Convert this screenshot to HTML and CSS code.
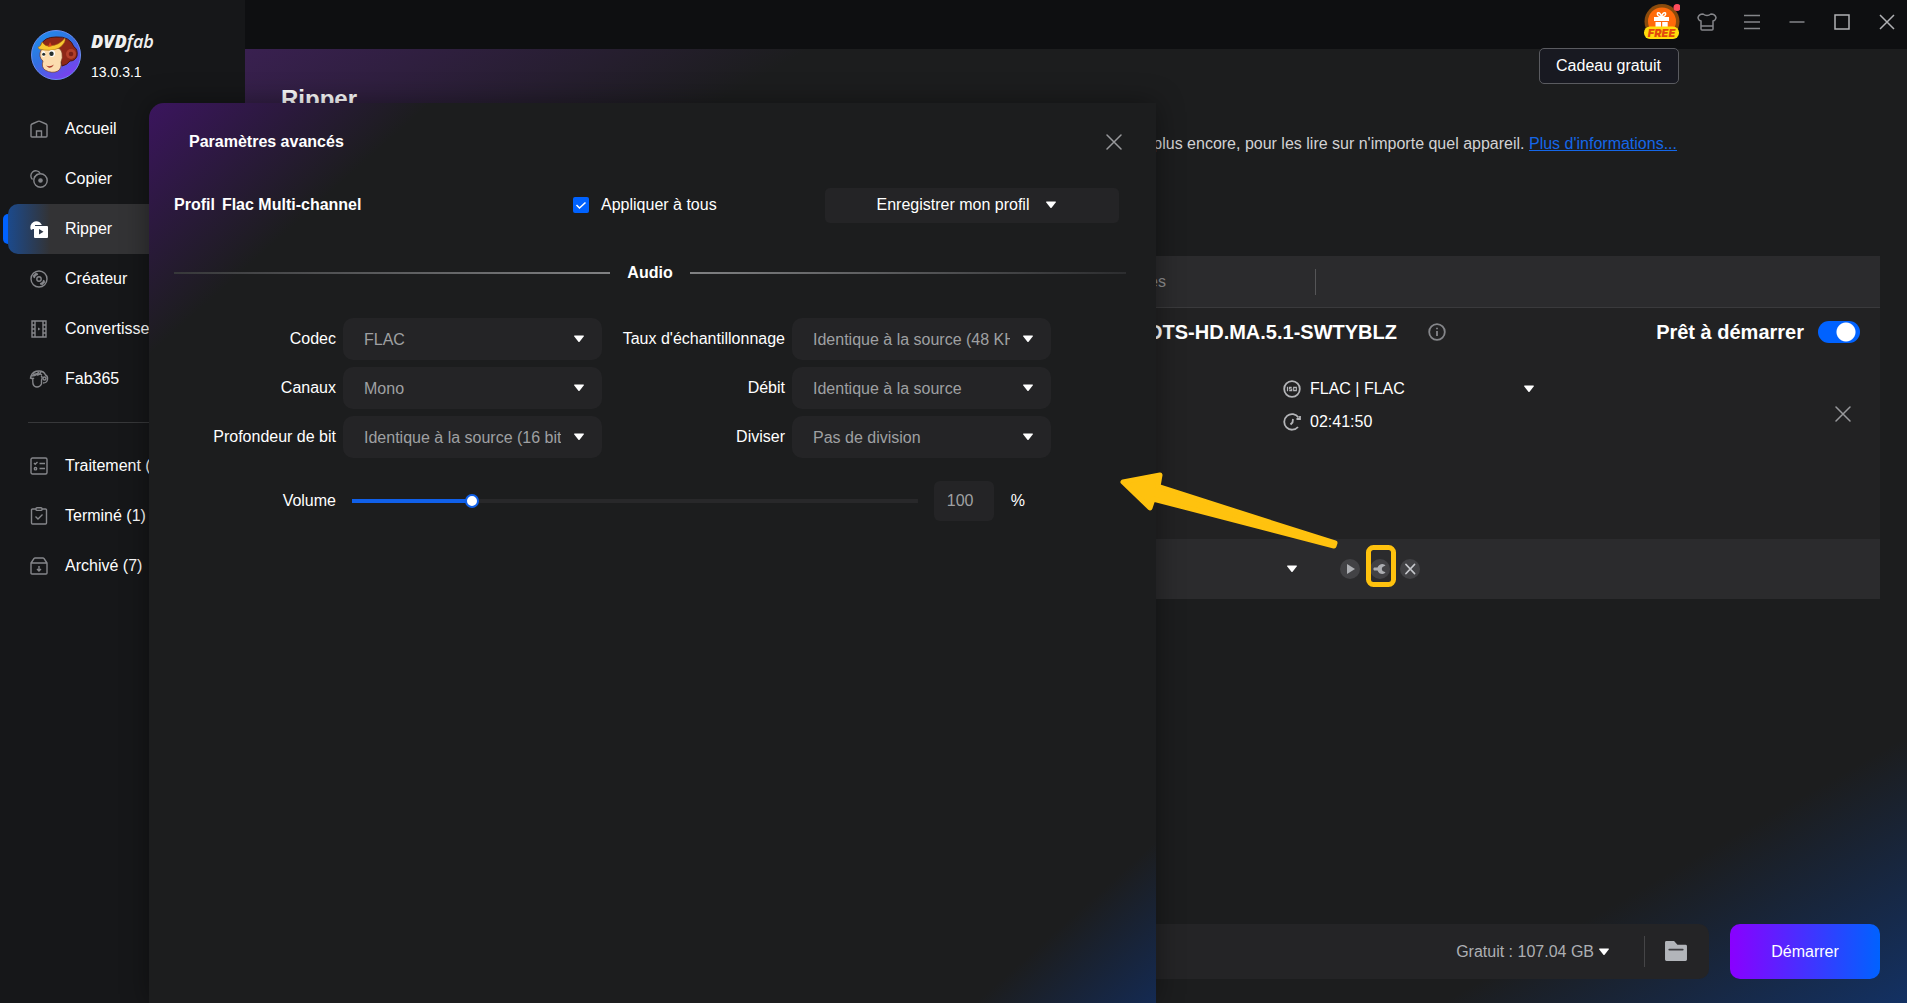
FILE: index.html
```html
<!DOCTYPE html>
<html lang="fr">
<head>
<meta charset="utf-8">
<meta name="viewport" content="width=device-width, initial-scale=1">
<title>DVDFab – Ripper</title>
<link rel="stylesheet" href="styles.css">
</head>
<body>
<svg class="sprite" aria-hidden="true">
  <symbol id="caret" viewBox="0 0 12 8"><path d="M1.500 .5h9q.6.3.2.9L6.600 6.800q-.6.5-1.200 0L1.300 1.400Q.9.800 1.500 .5z" fill="currentColor"/></symbol>
  <symbol id="cross" viewBox="0 0 16 16"><path d="M1 1l14 14M15 1L1 15" fill="none" stroke="currentColor" stroke-width="1.500" stroke-linecap="round"/></symbol>
</svg>
<div class="app">
  <aside class="sidebar">
    <div class="brand">
      <svg class="avatar" viewBox="0 0 50 50" aria-hidden="true">
        <defs><linearGradient id="disc" x1="0" y1="0" x2=".7" y2="1"><stop offset="0" stop-color="#1c93ee"/><stop offset=".5" stop-color="#3270e0"/><stop offset="1" stop-color="#7d3ff0"/></linearGradient></defs>
        <circle cx="25" cy="25" r="24.500" fill="url(#disc)" stroke="#6a8cf0" stroke-width="1"/>
        <path d="M10 15Q13 7 25 7Q39 6 43 17Q47 19 46 26Q44 31 39 31Q36 35 31 36L27 20L12 19Z" fill="#8e2717" stroke="#451512" stroke-width="1"/>
        <circle cx="40" cy="24" r="5" fill="#b3402a"/><circle cx="40" cy="24" r="2.300" fill="#7a1f16"/>
        <path d="M10 20Q15 17 22 18Q30 17 31 23Q32 28 30 32Q31 38 27 41Q21 44 14 40Q10 37 12 31Q7 27 10 20z" fill="#fbdcae" stroke="#7a3c22" stroke-width=".7"/>
        <path d="M7 17Q10 17 11 12Q14 17 19 16Q29 15 34 8Q35 13 28 18Q20 22 8 19Z" fill="#f8c832" stroke="#a86d12" stroke-width=".6"/>
        <path d="M19 12l2 4-4 1z" fill="#d8461e"/>
        <ellipse cx="12.500" cy="24" rx="1.700" ry="3" fill="#fff"/><ellipse cx="21" cy="23.500" rx="3" ry="3.400" fill="#fff"/>
        <circle cx="12.700" cy="24.300" r="1.500" fill="#25302e"/><circle cx="20.500" cy="23.800" r="2.200" fill="#25302e"/>
        <path d="M15 35.500Q19 37.500 23 34.500Q21 38.500 17.500 37.500z" fill="#a93a2a"/>
      </svg>
      <div class="brand-text">
        <span class="logo"><b>DVD</b>fab</span>
        <span class="version">13.0.3.1</span>
      </div>
    </div>
    <nav class="nav">
      <a href="#accueil"><svg class="ico" viewBox="0 0 18 18"><path d="M1 5.500Q1 4.500 2 4L8 1.300q1-.4 2 0L16 4q1 .5 1 1.500V16q0 1-1 1H2q-1 0-1-1zM6.500 17v-6h5v6"/></svg>Accueil</a>
      <a href="#copier"><svg class="ico" viewBox="0 0 18 18"><circle cx="10.500" cy="10.500" r="6.700"/><path d="M2.500 9.500A5 5 0 1 1 10 3M4 7.500L7.500 4"/><circle cx="10.500" cy="10.500" r="1.600" fill="currentColor"/></svg>Copier</a>
      <a href="#ripper" class="active" aria-current="page"><svg class="ico solid" viewBox="0 0 18 18"><path d="M1 10A5.500 5.500 0 1 1 11.500 4.500L12 5H5V9H3z"/><path fill-rule="evenodd" d="M4.500 6H17q1 0 1 1v10q0 1-1 1H5q-1 0-1-1V6.500zM9 9v5.500l4.500-2.700z"/></svg>Ripper</a>
      <a href="#createur"><svg class="ico" viewBox="0 0 18 18"><circle cx="9" cy="9" r="8"/><circle cx="9" cy="9" r="2.200"/><path d="M4 8a5 5 0 0 1 4-4M3 6.500L6.500 3M14 10a5 5 0 0 1-4 4M11.500 15l3.500-3.500"/></svg>Créateur</a>
      <a href="#convertisseur"><svg class="ico" viewBox="0 0 18 18"><path d="M2 1h14v16H2zM5 1v16M13 1v16M2 5h3M2 9h3M2 13h3M13 5h3M13 9h3M13 13h3"/><path d="M8 7.500v3L10.500 9z" fill="currentColor" stroke="none"/></svg>Convertisseur</a>
      <a href="#fab365"><svg class="ico" viewBox="0 0 18 18"><path d="M1 6Q3 1 9 1q5 0 6.500 4Q18 6 17.500 9.500T13 13M1 6l-.5 2Q3 9 4 8M3 8q-.5 3 0 6 1 3 4 3t4.500-3V10Q13 7 11 6M1 6Q5 6 7 4.500T12 5"/><circle cx="14.500" cy="8.500" r="1.500"/><path d="M3 4q4 1 6-2M7 5q3 0 4-3"/></svg>Fab365</a>
    </nav>
    <nav class="nav nav-queue">
      <a href="#traitement"><svg class="ico" viewBox="0 0 18 18"><rect x="1" y="1" width="16" height="16" rx="1.500"/><path d="M4 6l1.200 1.200L7.500 5M9.500 6.500H15M9.500 11.500H15"/><circle cx="5.500" cy="11.700" r="1.200"/></svg>Traitement (0)</a>
      <a href="#termine"><svg class="ico" viewBox="0 0 18 18"><path d="M6 2H2.500q-1 0-1 1v13q0 1 1 1h13q1 0 1-1V3q0-1-1-1H12"/><rect x="6" y=".8" width="6" height="2.600" rx="1"/><path d="M5.500 9.500L8 12l4.500-4.500"/></svg>Terminé (1)</a>
      <a href="#archive"><svg class="ico" viewBox="0 0 18 18"><path d="M1 6L4 1.500Q4.500 1 5 1h8q.5 0 1 .5L17 6v10q0 1-1 1H2q-1 0-1-1zM1 6h16M9 9v5M7 12l2 2 2-2"/></svg>Archivé (7)</a>
    </nav>
  </aside>

  <header class="topbar">
    <button type="button" aria-label="Cadeau gratuit">
      <svg class="gift" viewBox="0 0 36 36"><circle cx="18" cy="17.500" r="17.500" fill="#8a4b0c"/><circle cx="18" cy="17.500" r="14" fill="#ff6a0a"/><path d="M10 13h15v4H10zM11.500 18h5.500v6h-5.500zM18.200 18h5.500v6h-5.500z" fill="#fff"/><path d="M17.500 13q-5-1-4-4 3-1 4 4q1-5 4-4 1 3-4 4z" fill="none" stroke="#fff" stroke-width="1.500"/><rect x="0" y="22.500" width="35" height="12.500" rx="6" fill="#ffdc0c"/><text x="17.500" y="33" text-anchor="middle" class="free">FREE</text><circle cx="33" cy="3.500" r="3.500" fill="#ff4d5e"/></svg>
    </button>
    <button type="button" aria-label="Thèmes"><svg class="win" viewBox="0 0 20 18"><path d="M6 1Q10 4 14 1q4 0 5 3.500-.3 3-3 3.500v8q0 1-1 1H5q-1 0-1-1V8Q1.300 7.500 1 4.500 2 1 6 1zM4 13h12"/></svg></button>
    <button type="button" aria-label="Menu"><svg class="win" viewBox="0 0 20 18"><path d="M2 2.500h16M2 9h16M2 15.500h16"/></svg></button>
    <button type="button" aria-label="Réduire"><svg class="win" viewBox="0 0 20 18"><path d="M2.500 9h15"/></svg></button>
    <button type="button" aria-label="Agrandir"><svg class="win light" viewBox="0 0 20 18"><path d="M3 2h14v14H3z"/></svg></button>
    <button type="button" aria-label="Fermer"><svg class="win light" viewBox="0 0 20 18"><path d="M3 2l14 14M17 2L3 16"/></svg></button>
    <div class="tooltip" role="tooltip">Cadeau gratuit</div>
  </header>

  <main class="main">
    <h1>Ripper</h1>
    <p class="desc">Convertissez vos DVD, Blu-ray et plus encore, pour les lire sur n'importe quel appareil. <a href="#infos">Plus d'informations...</a></p>
    <section class="source">
      <div class="source-head"><span>Titres</span><i></i></div>
      <div class="source-title">
        <h2>DTS-HD.MA.5.1-SWTYBLZ<svg class="info" viewBox="0 0 18 18"><circle cx="9" cy="9" r="7.800"/><path d="M9 8v5M9 4.800v1.500"/></svg></h2>
        <label class="ready">Prêt à démarrer <input type="checkbox" class="toggle" checked></label>
      </div>
      <div class="source-body">
        <div class="facts">
          <button type="button" class="fact"><svg class="fico" viewBox="0 0 18 18"><circle cx="9" cy="9" r="7.800"/><path d="M4.500 6.800v4.400M8.700 7.400H6.500V9h2.200v1.700H6.200M10.700 7.400h2.600v3.300h-2.600z" stroke-width="1.200"/></svg>FLAC | FLAC<svg class="caret"><use href="#caret"/></svg></button>
          <div class="fact"><svg class="fico" viewBox="0 0 18 18"><path d="M15.500 4.500A7.800 7.800 0 1 0 15 14M13.500 6H17V3M10 6L9.500 9.500 7.500 11.500"/></svg>02:41:50</div>
        </div>
        <button type="button" class="remove" aria-label="Supprimer"><svg><use href="#cross"/></svg></button>
      </div>
      <div class="source-foot">
        <svg class="caret"><use href="#caret"/></svg>
        <div class="actions">
          <button type="button" aria-label="Lire"><svg viewBox="0 0 20 20"><path d="M7 5l8 5-8 5z" fill="#adafb3"/></svg></button>
          <div class="marked">
            <button type="button" aria-label="Paramètres avancés"><svg viewBox="0 0 20 20"><path d="M4 8.500h3.500Q9 5 12.500 5q2 0 3 1.500L12.500 8Q11 10 12.500 12l3 1.200Q14.500 15 12.500 15 9 15 7.500 11.500H4Q2.500 10 4 8.500z" fill="#adafb3"/></svg></button>
            <svg class="pointer" viewBox="0 0 285 124" aria-hidden="true"><path d="M8 14L45 7 43 18.500 220 75 219 78 38 31 35 40Z" fill="#ffc20e" stroke="#ffc20e" stroke-width="5" stroke-linejoin="round"/><rect x="253.500" y="79.500" width="25" height="37" rx="5" fill="none" stroke="#ffc20e" stroke-width="5"/></svg>
          </div>
          <button type="button" aria-label="Retirer"><svg viewBox="0 0 20 20"><path d="M6 5.500l8.500 9M14.500 5.500l-8.500 9" stroke="#c6c8cc" stroke-width="1.800" stroke-linecap="round"/></svg></button>
        </div>
      </div>
    </section>
    <footer class="output">
      <div class="output-bar">
        <button type="button" class="space">Gratuit : 107.04 GB <svg class="caret"><use href="#caret"/></svg></button>
        <button type="button" class="folder" aria-label="Ouvrir le dossier"><svg viewBox="0 0 24 22"><path d="M2 0h8l3.500 4H22q1.500 0 1.500 1.500v14Q23.500 21 22 21H2Q.5 21 .5 19.500V1.500Q.5 0 2 0z" fill="#b2b5ba"/><path d="M5 9h14" stroke="#3c3d40" stroke-width="2" stroke-linecap="round"/></svg></button>
      </div>
      <button type="button" class="start">Démarrer</button>
    </footer>
  </main>

  <section class="dialog" role="dialog" aria-labelledby="dialog-title">
    <div class="dialog-head">
      <h2 id="dialog-title">Paramètres avancés</h2>
      <button type="button" class="close" aria-label="Fermer"><svg><use href="#cross"/></svg></button>
    </div>
    <div class="profile">
      <p><span>Profil</span><span>Flac Multi-channel</span></p>
      <label class="apply"><span class="box"><input type="checkbox" checked><svg viewBox="0 0 16 16"><path d="M3.500 8l3 3L12.500 5.500" fill="none" stroke="#fff" stroke-width="1.500"/></svg></span>Appliquer à tous</label>
      <button type="button" class="save">Enregistrer mon profil<svg class="caret"><use href="#caret"/></svg></button>
    </div>
    <h3 class="rule">Audio</h3>
    <form class="fields">
      <label for="codec">Codec</label>
      <span class="pick"><select id="codec"><option>FLAC</option></select><svg class="caret"><use href="#caret"/></svg></span>
      <label for="taux">Taux d'échantillonnage</label>
      <span class="pick"><select id="taux"><option>Identique à la source (48 KHz)</option></select><svg class="caret"><use href="#caret"/></svg></span>
      <label for="canaux">Canaux</label>
      <span class="pick"><select id="canaux"><option>Mono</option></select><svg class="caret"><use href="#caret"/></svg></span>
      <label for="debit">Débit</label>
      <span class="pick"><select id="debit"><option>Identique à la source</option></select><svg class="caret"><use href="#caret"/></svg></span>
      <label for="bits">Profondeur de bit</label>
      <span class="pick"><select id="bits"><option>Identique à la source (16 bits)</option></select><svg class="caret"><use href="#caret"/></svg></span>
      <label for="diviser">Diviser</label>
      <span class="pick"><select id="diviser"><option>Pas de division</option></select><svg class="caret"><use href="#caret"/></svg></span>
      <label for="volume" class="volume-label">Volume</label>
      <div class="volume">
        <input type="range" id="volume" min="0" max="490" value="100">
        <input type="text" class="percent" value="100" aria-label="Volume en pourcentage"><span>%</span>
      </div>
    </form>
  </section>
</div>
</body>
</html>
```
FILE: styles.css
```css
* { box-sizing: border-box; }

body {
  margin: 0;
  background: #1c1d1e;
  color: #fff;
  font: 16px/20px "Liberation Sans", Arial, sans-serif;
}

h1, h2, h3, p { margin: 0; }

button, input, select { font: inherit; color: inherit; }

button {
  padding: 0;
  border: 0;
  background: none;
  cursor: pointer;
}

svg { display: block; }

.sprite { position: absolute; width: 0; height: 0; }

.caret { width: 12px; height: 8px; flex: none; color: #fff; }

.app {
  position: relative;
  display: grid;
  grid-template: 49px 1fr / 245px minmax(0, 1fr);
  min-height: 100vh;
  overflow: hidden;
}

/* Sidebar */
.sidebar {
  position: relative;
  z-index: 0;
  grid-row: 1 / 3;
  padding-top: 30px;
  background: #161719;
}

.brand {
  display: flex;
  gap: 10px;
  height: 74px;
  padding-left: 31px;
}

.avatar { width: 50px; height: 50px; }

.brand-text { display: flex; flex-direction: column; gap: 10px; }

.logo {
  font: italic 600 18px/22px "Open Sans", sans-serif;
  color: #f0f0f0;
}

.logo b { font-weight: 800; }

.version { font-size: 14px; }

.nav a {
  position: relative;
  display: flex;
  align-items: center;
  gap: 17px;
  height: 50px;
  margin-left: 8px;
  padding-left: 22px;
  border-radius: 10px 0 0 10px;
  color: #fff;
  text-decoration: none;
}

.nav .active { background: linear-gradient(90deg, #1c4a8c, #333335 42px); }

.nav .active::before {
  content: "";
  position: absolute;
  z-index: -1;
  left: -5px;
  top: 10px;
  width: 10px;
  height: 30px;
  border-radius: 5px 0 0 5px;
  background: #0062ff;
}

.nav-queue {
  margin-top: 18px;
  margin-left: 28px;
  padding-top: 18px;
  border-top: 1px solid #37383a;
}

.nav-queue a { margin-left: -20px; }

.ico {
  width: 18px;
  height: 18px;
  overflow: visible;
  fill: none;
  stroke: #85868a;
  stroke-width: 1.4px;
  color: #85868a;
}

.ico.solid { fill: #fff; stroke: none; }

/* Title bar */
.topbar {
  position: relative;
  display: flex;
  justify-content: flex-end;
  gap: 5px;
  height: 49px;
  padding-top: 4px;
  background: #0e0f11;
}

.topbar button {
  display: grid;
  place-items: center;
  width: 40px;
  height: 36px;
}

.gift { width: 36px; height: 36px; }

.free { font: italic 900 11px "Inter", sans-serif; fill: #e2480c; }

.win {
  width: 20px;
  height: 18px;
  fill: none;
  stroke: #85868a;
  stroke-width: 1.5px;
}

.win.light { stroke: #b0b1b4; }

.tooltip {
  position: absolute;
  top: 48px;
  right: 228px;
  padding: 7px 17px 7px 16px;
  border: 1px solid #5a5b60;
  border-radius: 5px;
  background: #181921;
}

/* Main panel */
.main {
  display: flex;
  flex-direction: column;
  padding: 36px 27px 24px 36px;
  background: linear-gradient(to bottom right, #392050, #1c1d1e 17%, #1c1d1e 86%, #133163);
}

h1 { font-size: 24px; line-height: 28px; }

.desc {
  margin: 21px 203px 0 0;
  color: #d2d2d4;
  text-align: right;
  white-space: nowrap;
}

.desc a { color: #1567e8; }

.source { margin-top: 102px; background: #222223; }

.source-head {
  display: grid;
  grid-template-columns: minmax(0, 1fr) 150px 564px;
  align-items: center;
  height: 52px;
  border-bottom: 1px solid #3a3a3c;
  background: #2b2b2d;
  color: #8e8e90;
  text-align: right;
}

.source-head i { height: 26px; border-right: 1px solid #555557; }

.source-title {
  display: grid;
  grid-template-columns: minmax(0, 1fr) 434px;
  align-items: center;
  height: 48px;
}

.source-title h2 {
  display: flex;
  align-items: center;
  justify-content: flex-end;
  gap: 31px;
  font-size: 20px;
}

.info { width: 18px; height: 18px; fill: none; stroke: #85868a; stroke-width: 1.8px; }

.ready {
  display: flex;
  align-items: center;
  justify-content: flex-end;
  gap: 14px;
  padding-right: 20px;
  font-size: 20px;
  font-weight: bold;
}

.toggle {
  appearance: none;
  width: 42px;
  height: 22px;
  margin: 0;
  border-radius: 11px;
  background: radial-gradient(circle at 28px 11px, #fff 9px, #0062ff 10px);
}

.source-body {
  display: flex;
  justify-content: flex-end;
  gap: 300px;
  height: 183px;
  padding-right: 29px;
}

.facts { width: 252px; padding-top: 16px; }

.fact {
  display: flex;
  align-items: center;
  gap: 9px;
  width: 100%;
  height: 33px;
  text-align: left;
}

.fact .caret { margin-left: auto; }

.fico { width: 18px; height: 18px; fill: none; stroke: #b4b5b8; stroke-width: 1.8px; }

.remove { height: 16px; margin-top: 50px; color: #98999c; }

.remove svg, .close svg { width: 16px; height: 16px; }

.source-foot {
  display: flex;
  align-items: center;
  justify-content: flex-end;
  gap: 42px;
  height: 60px;
  padding-right: 460px;
  background: #2b2b2d;
}

.actions { display: flex; gap: 10px; }

.actions button {
  display: block;
  width: 20px;
  height: 20px;
  border-radius: 50%;
  background: #424245;
}

.marked { position: relative; }

.pointer {
  position: absolute;
  z-index: 2;
  left: -255px;
  top: -91px;
  width: 285px;
  height: 124px;
  pointer-events: none;
}

.output {
  display: flex;
  gap: 21px;
  height: 55px;
  margin-top: auto;
}

.output-bar {
  flex: 1;
  display: flex;
  align-items: center;
  justify-content: flex-end;
  padding-right: 21px;
  border-radius: 10px;
  background: #242426;
}

.space {
  display: flex;
  align-items: center;
  gap: 4px;
  padding-right: 34px;
  color: #adafb3;
}

.folder { padding: 5px 0 5px 19px; border-left: 1px solid #454547; }

.folder svg { width: 24px; height: 21px; }

.start {
  width: 150px;
  border-radius: 10px;
  background: linear-gradient(90deg, #8a00ff, #0062ff);
}

/* Advanced settings dialog */
.dialog {
  position: absolute;
  z-index: 1;
  inset: 103px 751px 0 149px;
  min-width: 900px;
  border-radius: 15px 0 0 0;
  background: linear-gradient(to bottom right, #3b155e, #1c1d1e 14%, #1c1d1e 91%, #142a52);
  box-shadow: 0 0 28px rgba(0, 0, 0, 0.4);
}

.dialog-head {
  display: flex;
  align-items: center;
  justify-content: space-between;
  height: 77px;
  padding: 0 34px 0 40px;
}

.dialog h2, .dialog h3 { font-size: 16px; }

.close { color: #98999c; }

.profile {
  display: grid;
  grid-template-columns: 399px minmax(0, 1fr) 294px;
  align-items: center;
  height: 50px;
  padding: 0 37px 0 25px;
}

.profile p { display: flex; gap: 7px; font-weight: bold; }

.apply { display: flex; align-items: center; gap: 12px; }

.box, .pick { display: grid; align-items: center; }

.box > *, .pick > * { grid-area: 1 / 1; }

.box svg { width: 16px; height: 16px; }

.box input {
  appearance: none;
  width: 16px;
  height: 16px;
  margin: 0;
  border-radius: 2px;
  background: #0062ff;
}

.save {
  display: flex;
  align-items: center;
  justify-content: center;
  gap: 16px;
  height: 35px;
  padding-right: 10px;
  border-radius: 5px;
  background: #242426;
}

.rule {
  display: flex;
  align-items: center;
  gap: 17px;
  height: 85px;
  padding: 0 30px 0 25px;
}

.rule::before, .rule::after {
  content: "";
  flex: 1;
  height: 2px;
  background: linear-gradient(90deg, #37383a, #808183);
}

.rule::after { background: linear-gradient(270deg, #2c2d2f, #808183); }

.fields {
  display: grid;
  grid-template-columns: 162px minmax(0, 1fr) 176px minmax(0, 1fr);
  align-items: center;
  gap: 7px;
  padding: 3px 105px 0 25px;
}

.fields label { text-align: right; white-space: nowrap; }

.pick select {
  appearance: none;
  width: 100%;
  height: 42px;
  padding: 1px 41px 0 21px;
  border: 0;
  border-radius: 10px;
  background: #242426;
  color: #9fa0a2;
}

.pick .caret { justify-self: end; margin-right: 17px; pointer-events: none; }

.volume-label, .volume { margin-top: 16px; }

.volume {
  grid-column: 2 / 5;
  display: flex;
  align-items: center;
  padding: 0 26px 0 9px;
}

.volume input[type="range"] {
  appearance: none;
  flex: 1;
  height: 14px;
  margin: 0 16px 0 0;
  background: linear-gradient(90deg, #1060ea 21%, #28282a 21%) center / 100% 4px no-repeat;
}

.volume input[type="range"]::-webkit-slider-thumb {
  appearance: none;
  width: 14px;
  height: 14px;
  border: 2px solid #1060ea;
  border-radius: 50%;
  background: #fff;
}

.percent {
  width: 60px;
  height: 40px;
  margin-right: 17px;
  padding: 0 13px;
  border: 0;
  border-radius: 6px;
  background: #242426;
  color: #9fa0a2;
}
```
